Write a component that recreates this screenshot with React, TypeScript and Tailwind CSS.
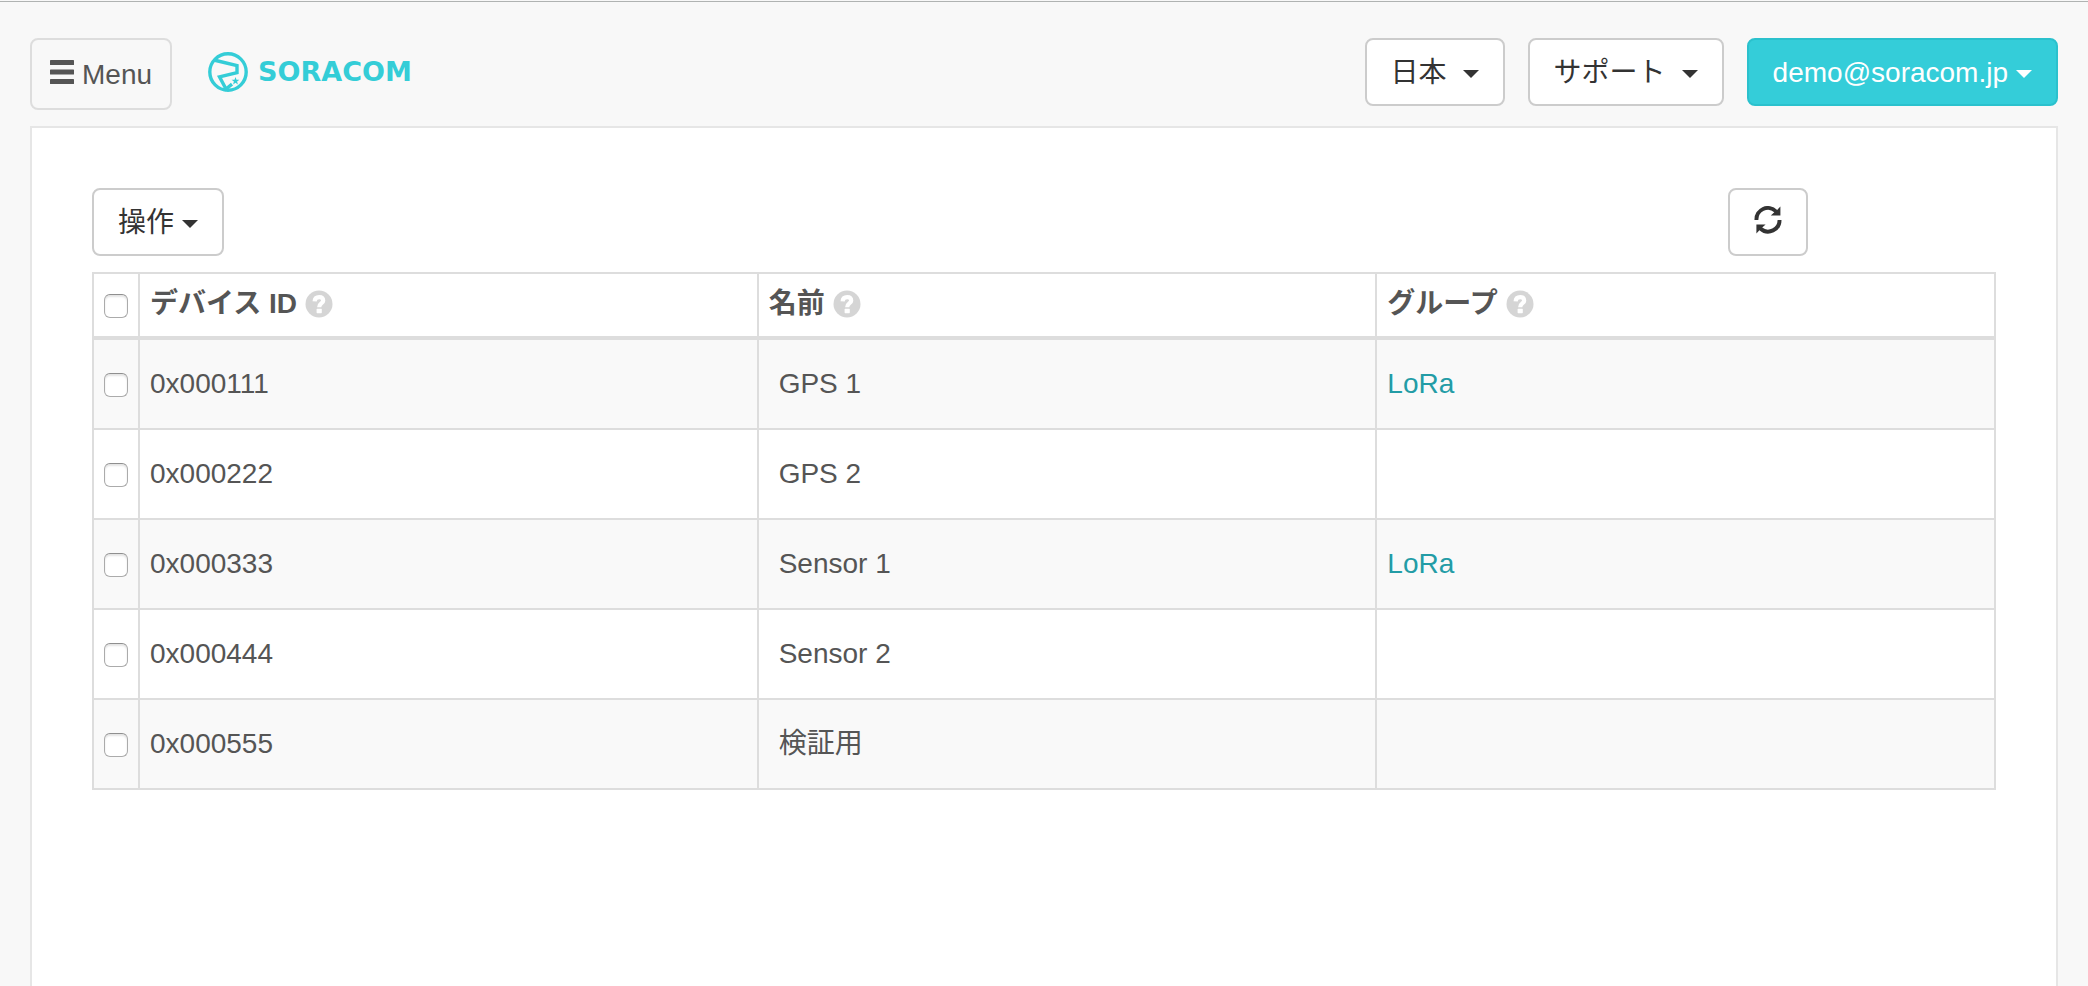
import React from "react";

const devices = [
  { id: "0x000111", name: "GPS 1", group: "LoRa" },
  { id: "0x000222", name: "GPS 2", group: "" },
  { id: "0x000333", name: "Sensor 1", group: "LoRa" },
  { id: "0x000444", name: "Sensor 2", group: "" },
  { id: "0x000555", name: "検証用", group: "" },
];

const columns = ["デバイス ID", "名前", "グループ"];

function Caret() {
  return (
    <svg className="mt-0.5 h-2 w-4 shrink-0" viewBox="0 0 16 8" fill="currentColor" aria-hidden="true">
      <path d="M0 0H16L8 8Z" />
    </svg>
  );
}

function HelpIcon() {
  return (
    <svg className="size-7 shrink-0 text-[#d5d5d5]" viewBox="0 0 28 28" aria-hidden="true">
      <circle cx="14" cy="14" r="13.5" fill="currentColor" />
      <path
        d="M9.6 11.4C9.8 8.4 11.6 7.2 14.2 7.2C16.8 7.2 18.2 8.7 18.2 10.7C18.2 13.3 14.2 13.2 14.2 17.2"
        fill="none"
        stroke="#fff"
        strokeWidth="4.2"
      />
      <rect x="11.6" y="18.8" width="5.2" height="4.4" rx="0.6" fill="#fff" />
    </svg>
  );
}

function RefreshIcon() {
  return (
    <svg className="size-7" viewBox="0 0 28 28" fill="currentColor" aria-hidden="true">
      <path d="M0.5 14A13.3 13.3 0 0 1 23.2 3.9L26.4 0.4V9.4H16.8L20.3 6.2A9.6 9.6 0 0 0 4.4 14Z" />
      <path d="M27.5 14A13.3 13.3 0 0 1 5.4 24.2L2.4 27.6V18.4H11.6L8.2 21.6A9.6 9.6 0 0 0 23.6 14Z" />
    </svg>
  );
}

function Logo() {
  return (
    <a href="#" aria-label="SORACOM" className="flex h-10 items-center gap-[10px] text-[#34cdd7]">
      <svg className="size-10 shrink-0" viewBox="0 0 40 40" fill="none" stroke="currentColor" aria-hidden="true">
        <circle cx="20" cy="20" r="18.2" strokeWidth="3.4" />
        <path d="M5.8 8L29 13.6V20.6L11.5 24.8L18 37L24 32.2" strokeWidth="3.4" />
        <path
          d="M27.5 25L28.5 27.8H31.4L29.1 29.6L29.9 32.4L27.5 30.7L25.1 32.4L25.9 29.6L23.6 27.8H26.5Z"
          fill="currentColor"
          stroke="none"
        />
      </svg>
      <span className="font-['DejaVu_Sans',sans-serif] text-[27px] leading-10 font-bold">SORACOM</span>
    </a>
  );
}

function DropButton({ label, wide, primary }: { label: string; wide?: boolean; primary?: boolean }) {
  return (
    <button
      type="button"
      className={`flex h-[68px] items-center rounded-lg border-2 px-6 pt-0.5 whitespace-nowrap ${wide ? "gap-4" : "gap-2"} ${
        primary ? "border-[#2bc1cd] bg-[#34cdd9] text-white" : "border-[#ccc] bg-white text-[#333]"
      }`}
    >
      {label}
      <Caret />
    </button>
  );
}

function Check({ label }: { label: string }) {
  return (
    <input
      type="checkbox"
      aria-label={label}
      className="mt-0.5 block size-6 appearance-none rounded-md border border-[#ababab] border-t-[#8f8f8f] bg-white shadow-[inset_0_2px_2px_#e4e4e4]"
    />
  );
}

export default function App() {
  return (
    <div className="flex min-h-screen flex-col bg-[#f8f8f8] font-['Liberation_Sans','Noto_Sans_CJK_JP',sans-serif] text-[28px] leading-10 text-[#555]">
      <div className="h-[2px] border-b border-[#b0b3b2]" />
      <header className="flex items-start px-[30px] pt-9 pb-4">
        <button
          type="button"
          className="flex h-[72px] items-center gap-2 rounded-lg border-2 border-[#ddd] px-[18px] pt-0.5"
        >
          <svg className="mb-1.5 size-6" viewBox="0 0 24 24" fill="currentColor" aria-hidden="true">
            <rect y="0" width="24" height="5" rx="0.6" />
            <rect y="9.5" width="24" height="5" rx="0.6" />
            <rect y="19" width="24" height="5" rx="0.6" />
          </svg>
          Menu
        </button>
        <div className="ml-9 flex h-[68px] items-center">
          <Logo />
        </div>
        <nav className="ml-auto flex gap-[23px]">
          <DropButton label="日本" wide />
          <DropButton label="サポート" wide />
          <DropButton label="demo@soracom.jp" primary />
        </nav>
      </header>
      <main className="mx-[30px] grow border-2 border-b-0 border-[#e6e6e6] bg-white p-[60px]">
        <div className="mb-4 flex items-center justify-between">
          <DropButton label="操作" />
          <button
            type="button"
            aria-label="更新"
            className="mr-[188px] flex h-[68px] w-20 items-center justify-center rounded-lg border-2 border-[#ccc] bg-white pb-1 text-[#333]"
          >
            <RefreshIcon />
          </button>
        </div>
        <table className="w-full table-fixed border-separate border-spacing-0 border-t-2 border-l-2 border-[#ddd]">
          <thead>
            <tr className="h-[66px] text-left">
              <th className="w-[46px] border-r-2 border-b-4 border-[#ddd] pl-[10px]">
                <Check label="すべて選択" />
              </th>
              {columns.map((column) => (
                <th key={column} className="border-r-2 border-b-4 border-[#ddd] px-[10px] pb-0.5">
                  <div className="flex items-center gap-2">
                    {column}
                    <HelpIcon />
                  </div>
                </th>
              ))}
            </tr>
          </thead>
          <tbody>
            {devices.map((device) => (
              <tr key={device.id} className="h-[90px] odd:bg-[#f9f9f9]">
                <td className="border-r-2 border-b-2 border-[#ddd] pl-[10px]">
                  <Check label={device.id} />
                </td>
                <td className="border-r-2 border-b-2 border-[#ddd] px-[10px]">{device.id}</td>
                <td className="border-r-2 border-b-2 border-[#ddd] px-5">{device.name}</td>
                <td className="border-r-2 border-b-2 border-[#ddd] px-[10px]">
                  {device.group && (
                    <a href="#" className="text-[#239ca6]">
                      {device.group}
                    </a>
                  )}
                </td>
              </tr>
            ))}
          </tbody>
        </table>
      </main>
    </div>
  );
}
